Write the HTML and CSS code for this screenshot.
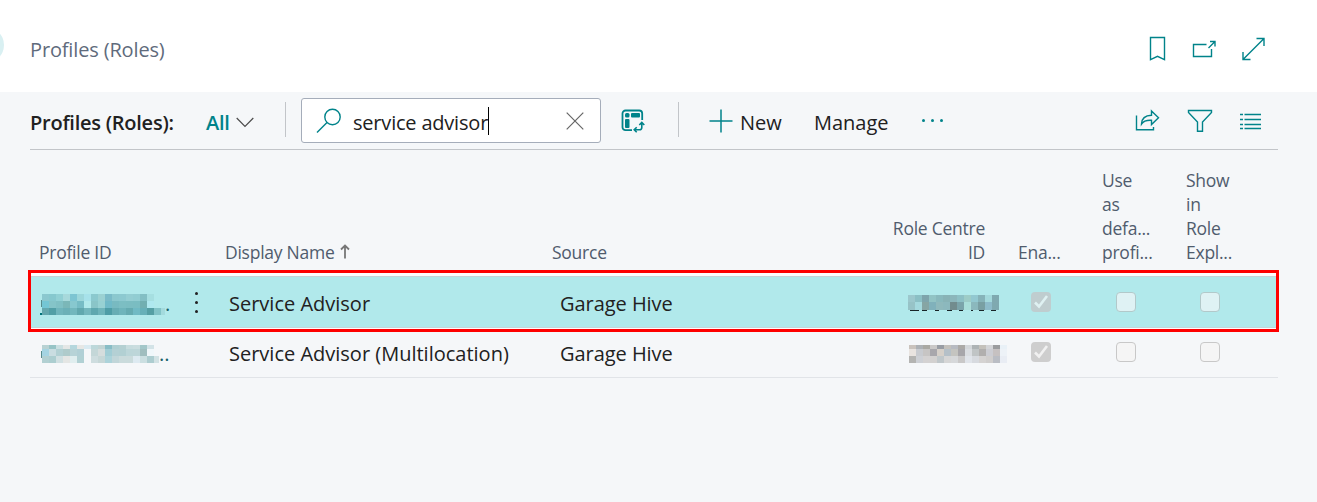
FILE: index.html
```html
<!DOCTYPE html>
<html lang="en">
<head>
<meta charset="utf-8">
<title>Profiles (Roles)</title>
<link rel="stylesheet" href="styles.css">
</head>
<body>
<header class="page-header">
  <span class="back-circle"></span>
  <h1 class="page-title">Profiles (Roles)</h1>
  <div class="page-actions">
    <svg width="18" height="26" viewBox="0 0 18 26"><path d="M1.500 1.500h14v22.200l-7-3.400-7 3.400z"/></svg>
    <svg width="25" height="20" viewBox="0 0 25 20"><path d="M14.500 5.500H1.500v12h18V10M16.500 9l6-6M18 2.500h5v5"/></svg>
    <svg width="23" height="24" viewBox="0 0 23 24"><path d="M1.500 22L21.500 2M14.500 1.500H22V9M1 15v7.500H8.500"/></svg>
  </div>
</header>
<main class="content">
  <div class="toolbar">
    <strong class="caption">Profiles (Roles):</strong>
    <span class="view">All</span>
    <svg class="chevron" width="18" height="11" viewBox="0 0 18 11"><path d="M.7 1l8.300 8.300L17.300 1"/></svg>
    <span class="divider"></span>
    <div class="search">
      <svg class="magnifier" width="26" height="26" viewBox="0 0 26 26"><circle cx="16.500" cy="10" r="7.700"/><path d="M11 15.500L1 25.500"/></svg>
      <span class="query">service advisor</span><span class="caret"></span>
      <svg class="clear" width="18" height="18" viewBox="0 0 18 18"><path d="M.7.700l16.600 16.600M17.300.700L.7 17.300"/></svg>
    </div>
    <svg class="analyse" width="24" height="24" viewBox="0 0 24 24"><path d="M11 21.200H4.500a3 3 0 0 1-3-3V4.500a3 3 0 0 1 3-3h13.700a3 3 0 0 1 3 3V11" stroke-width="1.800"/><rect x="4" y="4" width="4.500" height="4.500" rx="1.500" fill="currentColor" stroke="none"/><rect x="10" y="4" width="9" height="4.500" rx="1" fill="currentColor" stroke="none"/><rect x="4" y="10" width="4.500" height="9" rx="1" fill="currentColor" stroke="none"/><path d="M20.800 14v4.500q0 2.300-2.300 2.300H13.500M18.300 16l2.500-2.500 2.500 2.500M15.700 18.300l-2.500 2.500 2.500 2.500" stroke-width="1.600"/></svg>
    <span class="divider second"></span>
    <svg class="plus" width="24" height="24" viewBox="0 0 24 24"><path d="M12 .5v23M.5 12h23" stroke-width="1.500"/></svg>
    <span class="action new">New</span>
    <span class="action manage">Manage</span>
    <span class="more"><i></i><i></i><i></i></span>
    <div class="view-actions">
      <svg width="26" height="24" viewBox="0 0 26 24"><path d="M1.500 6.500v14.300h17V18M16.500 2l7 6.800-7 6.700v-4.200c-5-.3-8 .7-10 3.700.2-5.500 4-8.500 10-8.700z"/></svg>
      <svg width="26" height="24" viewBox="0 0 26 24"><path d="M1.500 1.500h23v2L15.500 13v9.300h-5V13L1.500 3.500z"/></svg>
      <svg width="24" height="20" viewBox="0 0 24 20"><path d="M1 3.500h3M5.500 3.500H22M1 8.500h3M5.500 8.500H22M1 13.500h3M5.500 13.500H22M1 17.500h3M5.500 17.500H22" stroke-width="1.400"/></svg>
    </div>
  </div>
  <div class="table">
    <div class="row head">
      <span class="c-id">Profile ID</span>
      <span class="c-menu"></span>
      <span class="c-name">Display Name<svg class="sort" width="10" height="15" viewBox="0 0 10 15"><path d="M5 14.500V2M1 5.500l4-4 4 4"/></svg></span>
      <span class="c-source">Source</span>
      <span class="c-centre">Role Centre<br>ID</span>
      <span class="c-enabled">Ena...</span>
      <span class="c-default">Use<br>as<br>defa...<br>profi...</span>
      <span class="c-show">Show<br>in<br>Role<br>Expl...</span>
    </div>
    <div class="row body selected">
      <span class="c-id"><svg class="mosaic" data-mosaic="idSelected" width="125" height="21"></svg><b class="dots">.</b></span>
      <span class="c-menu"><i></i><i></i><i></i></span>
      <span class="c-name">Service Advisor</span>
      <span class="c-source">Garage Hive</span>
      <span class="c-centre"><svg class="mosaic" data-mosaic="centreSelected" width="97" height="18"></svg></span>
      <span class="c-enabled"><span class="box checked"><svg width="20" height="20" viewBox="0 0 20 20"><path d="M4 10.500l4 4L16 4"/></svg></span></span>
      <span class="c-default"><span class="box"></span></span>
      <span class="c-show"><span class="box"></span></span>
    </div>
    <div class="row body plain">
      <span class="c-id"><svg class="mosaic" data-mosaic="id" width="119" height="18"></svg><b class="dots">..</b></span>
      <span class="c-menu"></span>
      <span class="c-name">Service Advisor (Multilocation)</span>
      <span class="c-source">Garage Hive</span>
      <span class="c-centre"><svg class="mosaic" data-mosaic="centre" width="100" height="18"></svg></span>
      <span class="c-enabled"><span class="box checked"><svg width="20" height="20" viewBox="0 0 20 20"><path d="M4 10.500l4 4L16 4"/></svg></span></span>
      <span class="c-default"><span class="box"></span></span>
      <span class="c-show"><span class="box"></span></span>
    </div>
    <span class="highlight"></span>
  </div>
</main>
<script src="mosaic.js"></script>
</body>
</html>
```
FILE: styles.css
```css
* { box-sizing: border-box; }
body {
  margin: 0;
  height: 502px;
  overflow: hidden;
  background: #f5f7f9;
  color: #212121;
  font-family: "Open Sans", "Noto Sans", sans-serif;
  font-size: 20px;
  letter-spacing: 0;
}
svg { display: block; flex: none; fill: none; stroke: currentColor; stroke-width: 1.4; }
.page-header {
  position: relative;
  display: flex;
  align-items: center;
  height: 92px;
  padding: 0 52px 0 30px;
  background: #fff;
  overflow: hidden;
}
.back-circle {
  position: absolute;
  left: -32px;
  top: 27px;
  width: 36px;
  height: 36px;
  border-radius: 50%;
  background: #d9f0f2;
}
.page-title {
  margin: 7px 0 0;
  color: #5f6b7c;
  font-size: 20px;
  font-weight: 400;
  letter-spacing: -0.15px;
  line-height: 26px;
}
.page-actions {
  display: flex;
  align-items: center;
  gap: 25px;
  margin: 6px 0 0 auto;
  color: #00838a;
}
.content { padding: 0 39px 0 30px; }
.toolbar {
  display: flex;
  align-items: center;
  height: 58px;
  border-bottom: 1px solid #c2c5c9;
}
.caption { width: 176px; font-weight: 600; letter-spacing: -0.25px; white-space: nowrap; padding-top: 3px; }
.view { width: 30px; color: #00838a; font-weight: 600; letter-spacing: -0.3px; padding-top: 3px; }
.chevron { color: #4b4b4b; margin-top: 4px; stroke-width: 1.2; }
.divider { width: 1px; height: 35px; margin-left: 31px; margin-top: -2px; background: #c2c5c9; }
.search {
  display: flex;
  align-items: center;
  width: 300px;
  height: 45px;
  margin-left: 15px;
  padding: 0 16px 0 14px;
  border: 1px solid #a5adba;
  border-radius: 3px;
  background: #fff;
}
.magnifier { color: #00838a; margin-top: -2px; }
.query { margin-left: 11px; padding-top: 3px; letter-spacing: -0.2px; white-space: nowrap; }
.caret { width: 1px; height: 28px; background: #000; }
.clear { margin-left: auto; color: #666; stroke-width: 1.2; }
.analyse { margin-left: 20px; color: #00838a; }
.second { margin-left: 33px; }
.plus { margin-left: 30px; color: #00838a; }
.action { padding-top: 3px; }
.new { width: 74px; margin-left: 7px; }
.manage { width: 108px; }
.more { display: flex; gap: 6px; }
.more i { width: 3px; height: 3px; border-radius: 50%; background: #00838a; }
.view-actions {
  display: flex;
  align-items: center;
  gap: 26px;
  margin-left: auto;
  padding-right: 15px;
  color: #00838a;
}
.table { position: relative; }
.row {
  display: grid;
  grid-template-columns: 143px 46px 326px 310px 130px 84px 84px 125px;
}
.head {
  align-items: end;
  height: 126px;
  padding-bottom: 12px;
  color: #505c6d;
  font-size: 17.5px;
  letter-spacing: -0.25px;
  line-height: 24px;
  white-space: nowrap;
}
.head .c-id { padding-left: 9px; }
.head .c-name { display: flex; padding-left: 6px; }
.head .c-source { padding-left: 7px; }
.head .c-centre { text-align: right; }
.head .c-enabled { padding-left: 33px; }
.head .c-default { padding-left: 33px; }
.head .c-show { padding-left: 33px; }
.sort { color: #777; margin: 4px 0 0 5px; stroke-width: 1.8; }
.body { height: 50px; align-items: center; border-bottom: 1px solid #e1e4e8; white-space: nowrap; }
.plain { padding-bottom: 2px; }
.selected {
  height: 52px;
  border-top: 1px solid #c7d4d9;
  border-bottom: 1px solid #c7d4d9;
  background: #b1e9eb;
}
.body .c-id { display: flex; align-items: center; padding-left: 10px; }
.dots { color: #17616a; font-weight: 400; padding-top: 3px; }
.c-menu { display: flex; flex-direction: column; align-items: center; gap: 6px; padding-top: 1px; }
.body .c-menu i { width: 3px; height: 3px; border-radius: 50%; background: #212121; }
.body .c-name { padding-left: 10px; padding-top: 3px; }
.body .c-source { padding-left: 15px; padding-top: 3px; letter-spacing: -0.05px; }
.body .c-centre { padding-left: 53px; }
.mosaic { shape-rendering: crispEdges; stroke: none; margin-top: 4px; }
.body .c-centre .mosaic { margin-left: -1px; }
.box { display: block; width: 20px; height: 20px; border: 1px solid #c8c8c8; border-radius: 4px; background: #f5f5f5; }
.selected .box { border-color: #b2c9ca; background: #dff2f4; }
.body .c-enabled { padding-left: 46px; }
.body .c-default { padding-left: 47px; }
.body .c-show { padding-left: 47px; }
.box.checked { border: 0; color: #f1f1f1; background: #cecece; }
.selected .box.checked { color: #dff1f2; background: #bfcdcf; }
.checked svg { stroke-width: 2.600; }
.highlight {
  position: absolute;
  left: -2px;
  top: 120px;
  width: 1251px;
  height: 62px;
  border: 3px solid #fe0000;
  box-shadow: inset 0 3px #fcfdfd, inset 0 -1px #fcfdfd;
}
```
FILE: mosaic.js
```js
// Masked cell values: rows of coloured blocks, seven pixels wide.
const mosaics = {
  idSelected: { x: 2, heights: [7, 7, 7], rows: [
    "8bc8cf 86c8ce 91d0d4 a7d9db 7dc5d2 9cd7db a7e2ea 8bc9ce 9bd1d2 7abbc8 8bc8ce 8cc9d0 94ced3 91cdd2 83bfc4 a6dfe1",
    "74c6d4 85c4c8 80c0c4 7bb7b8 87c8cf 76bcc5 b1e9eb 8ac5c8 97d1d3 70bac8 78bac1 7cbec3 7bbdc2 7abdc2 72afb1 afe8ef",
    "65a8ae 529fa6 70b5bc 6bb0b7 72b7bd 61a8ae 73b7bd 5fa8af 6eb4ba 4e9da6 67adb4 6eb4bb 65abb1 70bac4 67b0b8 559fa4 81c3c7 a3dadd"] },
  id: { x: 2, heights: [4, 7, 7], rows: [
    "b8d2d3 97c4c6 cadfe1 e4e7e6 b5d7dd e6e7e5 d9eaf1 bdd8da c1d4d4 89bdc6 afcfd2 b4d0d2 c7dcde cadddf a3c7c9 d3e3e7",
    "a5d4e2 c9dde1 b1d0d3 afcbcb b7d3d7 b1d0d6 f5f7f9 c4d7d8 d5dddd a1cdd5 b4d0d4 b2d0d3 bcd6d9 bdd6d9 a0bebf f0f7fa",
    "b2d0d2 acced0 d0e0e2 e4e6e4 e0eeef b1d1d4 f5f7f9 cedddf c6d7d7 acd3da c1d6d9 cadbdc cadbdc ddeaf1 cbdfe1 adcdd0 d2e2e4"] },
  centreSelected: { x: 1, heights: [7, 8], rows: [
    "9cc8cd 8bc0c5 7ea5ac 91c3c4 89b9bd 88b3b6 8bb6bb 8dc0c5 9dccc7 92c8d0 86b3b9 a3d9dc 7fa9b0",
    "97c3c7 a4d9de 86a5a4 80b1bb 8fb9bc 8cb8bd 728c8e 7ba4aa aaded9 8bb8bd 799fa3 8dbbca 7fa9b0"],
    strokes: [[3, 9], [15, 5], [28, 4], [40, 5], [52, 4], [64, 2], [72, 5], [84, 5]] },
  centre: { x: 2, heights: [4, 7, 7], rows: [
    "cac3bd adb1b5 aaa9a3 cac8c7 999da4 c4c1bc b8bbc2 acaaa7 d4d7da aeb3b5 c4c1bb d3d4d7 9b9c9e e9f1f7",
    "e9e4e0 c8cbd0 c7c5c4 a8a7ac d6d0c9 b5c0c8 c4c4c0 a7a6aa dadde1 c0c4c5 b1afae cccdd3 c6c1c1 edf2f7",
    "b4b4b2 cdd0d5 d4d2d2 d3d1d0 c0c7ca d6d6d6 d6d8da c9c8c8 e0e4ea d7dadf d5d3d2 d0cecd babdc4 e9edf4"] }
};
const ns = "http://www.w3.org/2000/svg";
function block(svg, x, y, w, h, fill) {
  const r = document.createElementNS(ns, "rect");
  Object.entries({ x, y, width: w, height: h, fill }).forEach(([k, v]) => r.setAttribute(k, v));
  svg.append(r);
}
document.querySelectorAll("[data-mosaic]").forEach(svg => {
  const name = svg.dataset.mosaic, m = mosaics[name];
  let y = 0;
  m.rows.forEach((row, i) => {
    row.split(" ").forEach((c, j) => block(svg, m.x + j * 7, y, 7, m.heights[i], "#" + c));
    y += m.heights[i];
  });
  (m.strokes || []).forEach(([x, w]) => block(svg, x, y, w, 1, "#182528"));
  if (name.startsWith("id")) block(svg, 1, 6, 1, 7, "#5a8d8e");
  if (name === "idSelected") block(svg, 0, 19, 2, 2, "#00737a");
});
```
